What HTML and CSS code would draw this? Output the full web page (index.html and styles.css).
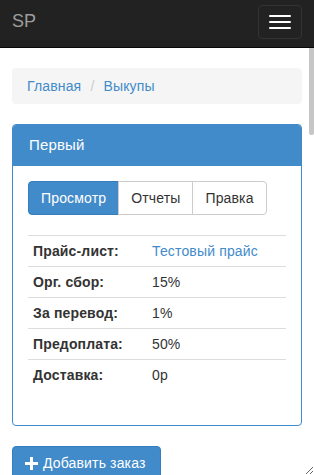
FILE: index.html
```html
<!DOCTYPE html>
<html lang="ru">
<head>
  <meta charset="UTF-8">
  <title>SP — Выкупы</title>
  <link rel="stylesheet" href="styles.css">
</head>
<body>
  <!-- верхняя панель -->
  <div class="navbar">
    <a class="brand" href="#">SP</a>
    <button class="navbar-toggle" type="button">
      <span class="icon-bar"></span>
      <span class="icon-bar"></span>
      <span class="icon-bar"></span>
    </button>
  </div>
  <!-- содержимое -->
  <div class="page">
    <div class="scroll-thumb"></div>
    <div class="content">
      <ol class="breadcrumb">
        <li><a href="#">Главная</a></li>
        <li><a href="#">Выкупы</a></li>
      </ol>

      <div class="panel">
        <div class="panel-heading">Первый</div>
        <div class="panel-body">
          <div class="btn-group">
            <a class="btn active" href="#">Просмотр</a>
            <a class="btn" href="#">Отчеты</a>
            <a class="btn" href="#">Правка</a>
          </div>
          <table class="info">
            <tr><th>Прайс-лист:</th><td><a href="#">Тестовый прайс</a></td></tr>
            <tr><th>Орг. сбор:</th><td>15%</td></tr>
            <tr><th>За перевод:</th><td>1%</td></tr>
            <tr><th>Предоплата:</th><td>50%</td></tr>
            <tr><th>Доставка:</th><td>0р</td></tr>
          </table>
        </div>
      </div>

      <a class="btn btn-primary" href="#">
        <svg class="icon-plus" width="13" height="13" viewBox="0 0 13 13"><path d="M5 0h3v5h5v3H8v5H5V8H0V5h5z" fill="#fff"/></svg>
        Добавить заказ
      </a>
    </div>
  </div>
</body>
</html>
```

FILE: styles.css
```css
* { box-sizing:border-box; }
html, body { height:100%; }
body { margin:0; font-family:'Liberation Sans', Arial, sans-serif; font-size:14px; line-height:20px; letter-spacing:0.15px; color:#333; background:#fff; display:flex; flex-direction:column; overflow:hidden; }
a { color:#428bca; text-decoration:none; }

.navbar { flex:none; height:48px; background:#222; border-bottom:1px solid #080808; display:flex; justify-content:space-between; align-items:flex-start; padding:0 12px; }
.brand { color:#9d9d9d; font-size:18px; line-height:20px; padding:11px 0; letter-spacing:0; }
.navbar-toggle { margin-top:5px; width:44px; height:34px; padding:9px 10px; background:#222; border:1px solid #333; border-radius:4px; display:flex; flex-direction:column; gap:4px; }
.icon-bar { display:block; width:22px; height:2px; background:#fff; border-radius:1px; }

.page { position:relative; flex:1; overflow-y:auto; resize:both; }
.scroll-thumb { position:absolute; top:0; right:0; width:5px; height:87px; background:#c6c6c6; border-radius:0 0 2px 2px; }
.content { padding:20px 12px 0 12px; }

.breadcrumb { list-style:none; margin:0 0 20px; padding:8px 15px; background:#f5f5f5; border-radius:4px; }
.breadcrumb li { display:inline-block; }
.breadcrumb li + li:before { content:"/\00a0"; padding:0 5px; color:#ccc; }

.panel { border:1px solid #428bca; border-radius:4px; margin-bottom:20px; }
.panel-heading { background:#428bca; color:#fff; font-size:15px; padding:10px 16px; border-bottom:1px solid #428bca; border-radius:3px 3px 0 0; }
.panel-body { padding:15px; }

.btn { display:inline-flex; align-items:center; padding:6px 12px; border:1px solid #ccc; background:#fff; color:#333; font-size:14px; line-height:20px; border-radius:4px; }
.btn-group { display:flex; margin-bottom:20px; }
.btn-group .btn { border-radius:0; margin-left:-1px; }
.btn-group .btn:first-child { border-radius:4px 0 0 4px; margin-left:0; }
.btn-group .btn:last-child { border-radius:0 4px 4px 0; }
.btn.active, .btn-primary { background:#428bca; border-color:#357ebd; color:#fff; }
.btn-primary { padding-right:14px; }
.icon-plus { margin-right:5px; }

.info { width:100%; border-collapse:collapse; margin-bottom:20px; }
.info th, .info td { padding:5px; text-align:left; border-top:1px solid #ddd; }
.info th { width:119px; font-weight:bold; }
```
